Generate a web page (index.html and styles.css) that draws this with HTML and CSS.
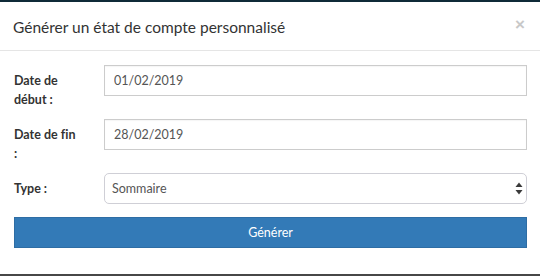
FILE: index.html
```html
<!DOCTYPE html>
<html lang="fr">
<head>
<meta charset="utf-8">
<title>Générer un état de compte personnalisé</title>
<link rel="stylesheet" href="styles.css">
</head>
<body>
<div class="modal">
  <div class="modal-header">
    <h4 class="modal-title">Générer un état de compte personnalisé</h4>
    <button type="button" class="close" aria-label="Fermer">×</button>
  </div>
  <form class="modal-body">
    <div class="form-group">
      <label class="form-label" for="debut">Date de début :</label>
      <input class="form-control" id="debut" type="text" value="01/02/2019">
    </div>
    <div class="form-group">
      <label class="form-label" for="fin">Date de fin :</label>
      <input class="form-control" id="fin" type="text" value="28/02/2019">
    </div>
    <div class="form-group form-group-last">
      <label class="form-label" for="type">Type :</label>
      <div class="select-wrap">
        <select class="form-select" id="type">
          <option>Sommaire</option>
          <option>Détaillé</option>
        </select>
        <svg class="select-arrows" width="8" height="13" viewBox="0 0 8 13" aria-hidden="true">
          <path d="M4 0.5 L7.5 5 L0.5 5 Z" fill="#3a3a3a"/>
          <path d="M0.5 8 L7.5 8 L4 12.5 Z" fill="#3a3a3a"/>
        </svg>
      </div>
    </div>
    <button type="button" class="btn-primary">Générer</button>
  </form>
</div>
</body>
</html>
```
FILE: styles.css
```css
html, body {
  margin: 0;
  padding: 0;
  background: #ffffff;
}

body {
  font-family: "Lato", "Liberation Sans", sans-serif;
  font-size: 13px;
  color: #333333;
  font-variant-ligatures: none;
}

.modal {
  width: 540px;
  height: 276px;
  box-sizing: border-box;
  border-top: 2px solid #0f2a38;
  border-bottom: 2px solid #474747;
  background: #ffffff;
}

.modal-header {
  display: flex;
  align-items: center;
  justify-content: space-between;
  height: 49px;
  box-sizing: border-box;
  padding: 0 13px;
  border-bottom: 1px solid #e5e5e5;
}

.modal-title {
  margin: 0;
  font-size: 15.5px;
  font-weight: 400;
  color: #333333;
  line-height: 20px;
  padding-top: 2px;
}

.close {
  border: 0;
  background: transparent;
  padding: 0;
  margin: 0 2px 4px 0;
  font-family: "Liberation Sans", sans-serif;
  font-size: 17px;
  font-weight: 700;
  line-height: 1;
  color: #c8c8c8;
  cursor: pointer;
}

.modal-body {
  display: flex;
  flex-direction: column;
  padding: 14px 13px 0 14px;
  margin: 0;
}

.form-group {
  display: flex;
  align-items: flex-start;
  height: 31px;
  margin-bottom: 23px;
}

.form-group-last {
  margin-bottom: 13px;
}

.form-label {
  width: 66px;
  flex: none;
  margin-right: 24px;
  padding-top: 6px;
  font-weight: 700;
  font-size: 12.5px;
  line-height: 19px;
  color: #333333;
}

.form-control,
.form-select {
  flex: 1;
  height: 31px;
  box-sizing: border-box;
  margin: 0;
  border: 1px solid #cccccc;
  border-radius: 0;
  padding: 0 9px;
  font-family: inherit;
  font-size: 12.5px;
  color: #555555;
  background: #ffffff;
  box-shadow: inset 0 1px 1px rgba(0, 0, 0, 0.04);
}

.select-wrap {
  flex: 1;
  display: flex;
  position: relative;
}

.form-select {
  -webkit-appearance: none;
  appearance: none;
  border-color: #cfcfd6;
  border-radius: 5px;
  padding: 0 24px 0 7px;
  box-shadow: none;
}

.select-arrows {
  position: absolute;
  right: 4px;
  top: 9px;
  pointer-events: none;
}

.btn-primary {
  height: 31px;
  box-sizing: border-box;
  width: 100%;
  border: 1px solid #2e6da4;
  border-radius: 0;
  background: #337ab7;
  color: #ffffff;
  font-family: inherit;
  font-size: 12.5px;
  padding: 0;
  cursor: pointer;
}
```
